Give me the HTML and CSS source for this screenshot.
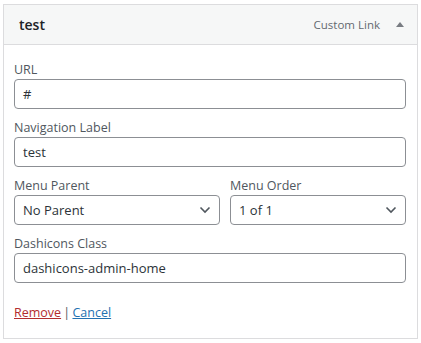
FILE: index.html
```html
<!DOCTYPE html>
<html>
<head>
<meta charset="utf-8">
<link rel="stylesheet" href="styles.css">
</head>
<body>
<div class="page">
  <div class="item">
    <div class="item-bar">
      <span class="item-title">test</span>
      <span class="item-controls">
        <span class="item-type">Custom Link</span>
        <span class="item-toggle"></span>
      </span>
    </div>
    <div class="item-settings">
      <div class="field">
        <label class="field-label">URL</label>
        <div class="input">#</div>
      </div>
      <div class="field">
        <label class="field-label">Navigation Label</label>
        <div class="input">test</div>
      </div>
      <div class="field-row">
        <div class="field">
          <label class="field-label">Menu Parent</label>
          <div class="input select">
            <span>No Parent</span>
            <svg class="chevron" width="12" height="8" viewBox="0 0 12 8"><path d="M1.5 1.5 L6 6 L10.5 1.5" fill="none" stroke="#50575e" stroke-width="1.6"/></svg>
          </div>
        </div>
        <div class="field">
          <label class="field-label">Menu Order</label>
          <div class="input select">
            <span>1 of 1</span>
            <svg class="chevron" width="12" height="8" viewBox="0 0 12 8"><path d="M1.5 1.5 L6 6 L10.5 1.5" fill="none" stroke="#50575e" stroke-width="1.6"/></svg>
          </div>
        </div>
      </div>
      <div class="field">
        <label class="field-label">Dashicons Class</label>
        <div class="input">dashicons-admin-home</div>
      </div>
      <div class="actions">
        <a class="remove" href="#">Remove</a> <span class="sep">|</span> <a class="cancel" href="#">Cancel</a>
      </div>
    </div>
  </div>
</div>
</body>
</html>
```

FILE: styles.css
```css
* { box-sizing: border-box; }
html, body { margin: 0; padding: 0; background: #ffffff; }
body {
  font-family: "Open Sans", "Noto Sans", sans-serif;
  font-size: 13px;
  color: #3c434a;
}
.page {
  padding: 4px 4px 0 3px;
}
.item {
  width: 415px;
  border: 1px solid #dcdcde;
  background: #fff;
}
.item-bar {
  height: 40px;
  background: #f6f7f7;
  border-bottom: 1px solid #dcdcde;
  display: flex;
  align-items: center;
  justify-content: space-between;
  padding: 0 13px 0 15px;
}
.item-title {
  font-size: 14px;
  font-weight: 600;
  color: #1d2327;
}
.item-controls {
  display: flex;
  align-items: center;
  gap: 16px;
}
.item-type {
  font-size: 11.5px;
  color: #646970;
}
.item-toggle {
  width: 0;
  height: 0;
  border-left: 4px solid transparent;
  border-right: 4px solid transparent;
  border-bottom: 5px solid #787c82;
}
.item-settings {
  padding: 16px 11px 16px 10px;
  display: flex;
  flex-direction: column;
  gap: 10px;
}
.field {
  display: flex;
  flex-direction: column;
}
.field-label {
  line-height: 18px;
  height: 18px;
  color: #50575e;
  font-size: 12.5px;
}
.input {
  height: 30px;
  border: 1px solid #8c8f94;
  border-radius: 4px;
  padding: 0 8px;
  display: flex;
  align-items: center;
  font-size: 13px;
  color: #2c3338;
}
.select {
  justify-content: space-between;
}
.chevron { display: block; }
.field-row {
  display: grid;
  grid-template-columns: 206px 1fr;
  gap: 10px;
}
.actions {
  margin-top: 11px;
  line-height: 18px;
  font-size: 12.5px;
  word-spacing: -1px;
}
.remove { color: #b32d2e; }
.cancel { color: #2271b1; }
.sep { color: #50575e; }
```
